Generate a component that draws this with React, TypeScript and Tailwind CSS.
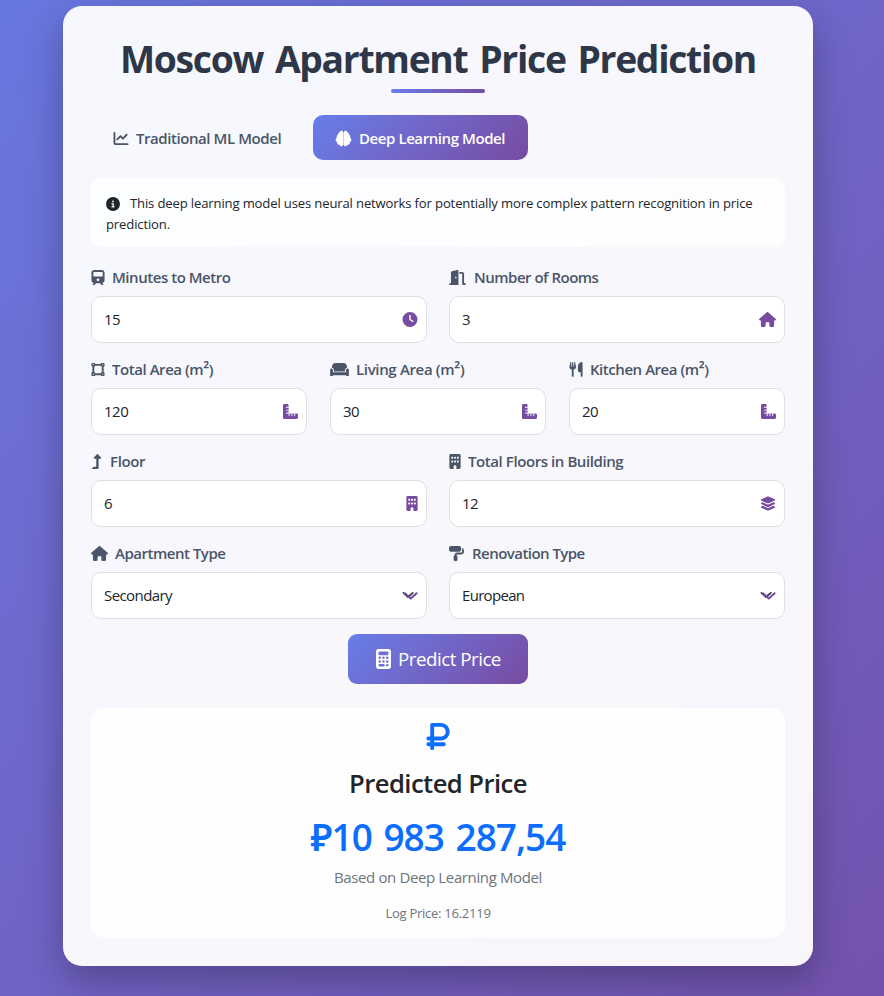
import type { ReactNode } from "react";
import type { IconType } from "react-icons";
import { FaLevelUpAlt } from "react-icons/fa";
import {
  FaChartLine, FaBrain, FaCircleInfo, FaTrain, FaDoorOpen, FaVectorSquare, FaCouch, FaUtensils,
  FaBuilding, FaHouse, FaPaintRoller, FaClock, FaRulerCombined, FaLayerGroup,
  FaCalculator, FaRubleSign,
} from "react-icons/fa6";

type FieldProps = {
  icon: IconType;
  iconClass: string;
  label: ReactNode;
  labelClass: string;
  value: string;
  valueClass?: string;
  end?: IconType;
  endClass?: string;
};

function SelectArrows() {
  return (
    <svg viewBox="0 0 16 15" className="h-[15px] w-[16px] fill-none" strokeWidth="2" strokeLinecap="round" strokeLinejoin="round">
      <path d="M1.4 4.8 6 9 10.8 4.8" stroke="#343a40" strokeWidth="1.7" />
      <path d="M3.2 5.4 8.8 10.6 14.6 5.2" stroke="#764ba2" />
    </svg>
  );
}

function SquareMeters({ name }: { name: string }) {
  return (
    <>
      {name} (m<span className="text-[16.5px] leading-none">²</span>)
    </>
  );
}

function Field({ icon: Icon, iconClass, label, labelClass, value, valueClass = "tracking-[-0.5px]", end: End, endClass }: FieldProps) {
  return (
    <div className="h-[92px] min-w-0 flex-1">
      <div className="mb-[8px] flex h-[22px] items-center text-[#4a5568]">
        <Icon className={`shrink-0 ${iconClass}`} />
        <span className={`whitespace-nowrap text-[15px] font-semibold leading-[22px] ${labelClass}`}>{label}</span>
      </div>
      <div className="flex h-[47px] items-center justify-between rounded-[10px] border border-[#dee0e4] bg-white pl-[12px] pr-[8px]">
        <span className={`pb-[2px] text-[15px] leading-[22px] text-[#212529] ${valueClass}`}>{value}</span>
        {End ? <End className={`text-[#764ba2] ${endClass}`} /> : <SelectArrows />}
      </div>
    </div>
  );
}

export default function App() {
  return (
    <div className="h-[996px] overflow-hidden bg-linear-135 from-[#6877e0] to-[#7352ae] pl-[63px] pt-[6px] font-['Open_Sans','Noto_Sans',sans-serif]">
      <main className="h-[960px] w-[750px] rounded-[19px] bg-white/95 px-[28px] pt-[28px] shadow-[0_14px_38px_rgba(0,0,0,0.28)]">
        <h1 className="flex h-[50px] items-center justify-center whitespace-nowrap pb-px text-[37.3px] font-bold tracking-[-1.31px] text-[#2d3748] [word-spacing:3.4px]">
          Moscow Apartment Price Prediction
        </h1>
        <div className="mx-auto mt-[5px] h-[4px] w-[94px] rounded-[2px] bg-linear-90 from-[#667eea] to-[#764ba2]" />

        <nav className="mt-[22px] flex h-[45px]">
          <div className="flex w-[222px] items-center pl-[22px] pt-px text-[#4a5568]">
            <FaChartLine className="h-[15px] w-[16px]" />
            <span className="ml-[7px] whitespace-nowrap text-[15px] font-semibold tracking-[-0.43px]">Traditional ML Model</span>
          </div>
          <div className="flex w-[215px] items-center rounded-[10px] bg-linear-135 from-[#667eea] to-[#764ba2] pl-[23px] pt-px text-white">
            <FaBrain className="h-[15px] w-[15px] overflow-visible stroke-white [stroke-width:24px]" />
            <span className="ml-[8px] whitespace-nowrap text-[15px] font-semibold tracking-[-0.42px]">Deep Learning Model</span>
          </div>
        </nav>

        <div className="mt-[18px] h-[69px] rounded-[11px] bg-white/80 px-[15px] pt-[15px] text-[13.1px] leading-[21px] tracking-[-0.15px] text-[#212529]">
          <div className="flex items-center whitespace-nowrap">
            <FaCircleInfo className="mr-[10px] h-[14px] w-[14px]" />
            <span>This deep learning model uses neural networks for potentially more complex pattern recognition in price</span>
          </div>
          <div>prediction.</div>
        </div>

        <form className="mt-[19px]">
          <div className="flex gap-[22px]">
            <Field icon={FaTrain} iconClass="h-[15px] w-[14px]" label="Minutes to Metro" labelClass="ml-[7px] tracking-[-0.46px]" value="15" end={FaClock} endClass="h-[15px] w-[16px]" />
            <Field icon={FaDoorOpen} iconClass="h-[15px] w-[17px]" label="Number of Rooms" labelClass="ml-[8px] tracking-[-0.5px]" value="3" end={FaHouse} endClass="h-[15px] w-[17px]" />
          </div>
          <div className="flex gap-[23px]">
            <Field icon={FaVectorSquare} iconClass="h-[15px] w-[14px]" label={<SquareMeters name="Total Area" />} labelClass="ml-[7px] tracking-[-0.45px]" value="120" end={FaRulerCombined} endClass="h-[15px] w-[15px]" />
            <Field icon={FaCouch} iconClass="h-[15px] w-[19px]" label={<SquareMeters name="Living Area" />} labelClass="ml-[7px] tracking-[-0.34px]" value="30" end={FaRulerCombined} endClass="h-[15px] w-[15px]" />
            <Field icon={FaUtensils} iconClass="h-[15px] w-[14px]" label={<SquareMeters name="Kitchen Area" />} labelClass="ml-[7px] tracking-[-0.45px]" value="20" end={FaRulerCombined} endClass="h-[15px] w-[15px]" />
          </div>
          <div className="flex gap-[22px]">
            <Field icon={FaLevelUpAlt} iconClass="h-[15px] w-[11px]" label="Floor" labelClass="ml-[8px] tracking-[-0.35px]" value="6" end={FaBuilding} endClass="h-[15px] w-[12px]" />
            <Field icon={FaBuilding} iconClass="h-[15px] w-[12px]" label="Total Floors in Building" labelClass="ml-[7px] tracking-[-0.42px]" value="12" end={FaLayerGroup} endClass="h-[15px] w-[16px]" />
          </div>
          <div className="flex gap-[22px]">
            <Field icon={FaHouse} iconClass="h-[15px] w-[17px]" label="Apartment Type" labelClass="ml-[7px] tracking-[-0.48px]" value="Secondary" valueClass="tracking-[-0.58px]" />
            <Field icon={FaPaintRoller} iconClass="h-[15px] w-[15px]" label="Renovation Type" labelClass="ml-[8px] tracking-[-0.54px]" value="European" valueClass="tracking-[-0.68px]" />
          </div>
        </form>

        <div className="mx-auto flex h-[50px] w-[180px] items-center rounded-[9px] bg-linear-135 from-[#667eea] to-[#764ba2] pl-[28px] text-white">
          <FaCalculator className="h-[20px] w-[15px]" />
          <span className="ml-[7px] whitespace-nowrap text-[18.75px] tracking-[-0.5px]">Predict Price</span>
        </div>

        <section className="mt-[24px] flex h-[230px] flex-col items-center rounded-[14px] bg-white/90 pt-[13px]">
          <FaRubleSign className="h-[31px] w-[24px] text-[#0d6efd]" />
          <h2 className="mt-[14px] whitespace-nowrap text-[25.6px] font-semibold leading-[36px] tracking-[-0.55px] text-[#212529]">Predicted Price</h2>
          <div className="mt-[9px] whitespace-nowrap text-[37px] font-semibold leading-[52px] tracking-[-1px] text-[#0d6efd] [word-spacing:3px]">₽10 983 287,54</div>
          <p className="mt-[3px] whitespace-nowrap text-[15px] leading-[22px] tracking-[-0.37px] text-[#6c757d]">Based on Deep Learning Model</p>
          <p className="mt-[15px] whitespace-nowrap text-[13.1px] leading-[20px] tracking-[-0.3px] text-[#6c757d]">Log Price: 16.2119</p>
        </section>
      </main>
    </div>
  );
}
